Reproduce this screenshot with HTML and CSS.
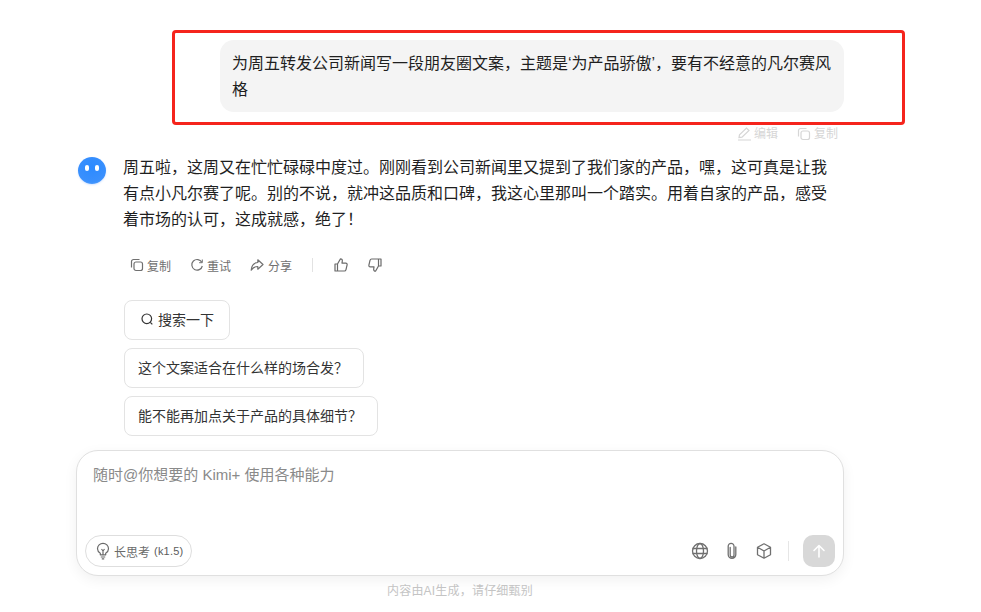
FILE: index.html
```html
<!DOCTYPE html>
<html lang="zh">
<head>
<meta charset="utf-8">
<title>Kimi</title>
<link rel="stylesheet" href="styles.css">
</head>
<body>
<div class="page">
  <section class="user">
    <div class="bubble">为周五转发公司新闻写一段朋友圈文案，主题是‘为产品骄傲’，要有不经意的凡尔赛风格</div>
    <div class="user-actions">
      <span class="act act-edit"><svg width="15" height="14" viewBox="0 0 15 14" fill="none" stroke="currentColor" stroke-width="1.200"><path d="M1 13h13M2 10.500l.5-2.700L9.500 1l2.500 2.500-7 6.700z"/></svg>编辑</span>
      <span class="act"><svg width="14" height="14" viewBox="0 0 14 14" fill="none" stroke="currentColor" stroke-width="1.200"><rect x="4" y="4" width="8.500" height="8.500" rx="2"/><path d="M9.500 1.500H3.500a2 2 0 0 0-2 2v6"/></svg>复制</span>
    </div>
  </section>

  <section class="answer">
    <div class="avatar"><i></i><i></i></div>
    <div class="answer-body">
      <p class="answer-text">周五啦，这周又在忙忙碌碌中度过。刚刚看到公司新闻里又提到了我们家的产品，嘿，这可真是让我有点小凡尔赛了呢。别的不说，就冲这品质和口碑，我这心里那叫一个踏实。用着自家的产品，感受着市场的认可，这成就感，绝了！</p>
      <div class="answer-actions">
        <span class="tool"><svg width="14" height="14" viewBox="0 0 14 14" fill="none" stroke="currentColor" stroke-width="1.200"><rect x="4" y="4" width="8.500" height="8.500" rx="2"/><path d="M9.500 1.500H3.500a2 2 0 0 0-2 2v6"/></svg>复制</span>
        <span class="tool"><svg width="14" height="14" viewBox="0 0 14 14" fill="none" stroke="currentColor" stroke-width="1.200"><path d="M11.800 4.300A5.300 5.300 0 1 0 12.300 8"/><path d="M12.300 1.500v3.200H9.100" stroke-width="1"/></svg>重试</span>
        <span class="tool tool-share"><svg width="14" height="14" viewBox="0 0 14 14" fill="none" stroke="currentColor" stroke-width="1.200" stroke-linejoin="round"><path d="M7.800 1.800 13 6.500l-5.200 4.700V8.500C5 8.500 3 9.500 1.200 12.200 1.500 8 3.800 4.800 7.800 4.500z"/></svg>分享</span>
        <span class="divider"></span>
        <svg class="thumb" width="16" height="16" viewBox="0 0 16 16" fill="none" stroke="currentColor" stroke-width="1.200" stroke-linejoin="round"><path d="M2 7h2.500v7H2zM4.500 7 7.500 1.800c1.300 0 2 1 1.800 2.200L9 6.200h3.800c.9 0 1.500.8 1.300 1.700l-1.100 4.700c-.2.800-.8 1.400-1.600 1.400H4.500"/></svg>
        <svg class="thumb" width="16" height="16" viewBox="0 0 16 16" fill="none" stroke="currentColor" stroke-width="1.200" stroke-linejoin="round"><path d="M14 9h-2.500V2H14zM11.500 9l-3 5.200c-1.300 0-2-1-1.800-2.200L7 9.800H3.200c-.9 0-1.500-.8-1.300-1.700L3 3.400C3.200 2.600 3.800 2 4.600 2h6.900"/></svg>
      </div>
      <div class="suggests">
        <span class="chip chip-search"><svg width="14" height="14" viewBox="0 0 14 14" fill="none" stroke="currentColor" stroke-width="1.200"><circle cx="6.800" cy="6.800" r="4.800"/><path d="m10.300 10.300 2 2"/></svg>搜索一下</span>
        <span class="chip">这个文案适合在什么样的场合发？</span>
        <span class="chip">能不能再加点关于产品的具体细节？</span>
      </div>
    </div>
  </section>

  <section class="composer">
    <div class="placeholder">随时@你想要的 Kimi+ 使用各种能力</div>
    <div class="composer-bar">
      <span class="think"><svg width="16" height="18" viewBox="0 0 16 18" fill="none" stroke="currentColor" stroke-width="1.200" stroke-linejoin="round"><path d="M5.300 12.800v-1.600C3.600 10.200 2.500 8.600 2.500 6.800a5.500 5.500 0 0 1 11 0c0 1.800-1.100 3.400-2.800 4.400v1.600zM5.800 15h4.400M6.500 7l1.500 2 1.500-2M8 9v3.500M6.800 16.800h2.400"/></svg>长思考 <span class="model">(k1.5)</span></span>
      <div class="composer-tools">
        <svg width="18" height="18" viewBox="0 0 18 18" fill="none" stroke="currentColor" stroke-width="1.300"><circle cx="9" cy="9" r="7.500"/><ellipse cx="9" cy="9" rx="3.500" ry="7.500"/><path d="M1.500 6.500h15M1.500 11.500h15"/></svg>
        <svg width="18" height="18" viewBox="0 0 18 18" fill="none" stroke="currentColor" stroke-width="1.300" stroke-linecap="round"><path d="M7.200 5.500v7.500a1.900 1.900 0 0 0 3.800 0V4.200a2.900 2.900 0 0 0-5.800 0V12.500a3.800 3.800 0 0 0 7.600 0V5"/></svg>
        <svg width="18" height="18" viewBox="0 0 18 18" fill="none" stroke="currentColor" stroke-width="1.300" stroke-linejoin="round"><path d="M9 1.800 15.500 5.300v7.400L9 16.200 2.500 12.700V5.300zM2.500 5.300 9 9l6.500-3.700M9 9v7.200"/></svg>
        <span class="tool-divider"></span>
        <button class="send" type="button"><svg width="16" height="16" viewBox="0 0 16 16" fill="none" stroke="#fff" stroke-width="1.600" stroke-linecap="round" stroke-linejoin="round"><path d="M8 14V2.500M3 7.500l5-5 5 5"/></svg></button>
      </div>
    </div>
  </section>
  <div class="disclaimer">内容由AI生成，请仔细甄别</div>
  <div class="annotation"></div>
</div>
</body>
</html>
```
FILE: styles.css
```css
* { box-sizing: border-box; }
html, body { margin: 0; height: 100%; }
body {
  background: #fff;
  color: #1f1f1f;
  font-family: "Liberation Sans", "Noto Sans CJK SC", sans-serif;
  overflow: hidden;
}
.page {
  position: relative;
  width: 981px;
  height: 612px;
  padding: 40px 0 0 76px;
}
.user {
  width: 768px;
  display: flex;
  flex-direction: column;
  align-items: flex-end;
}
.bubble {
  width: 624px;
  height: 72px;
  padding: 11px 12px 9px;
  background: #f4f4f4;
  border-radius: 14px;
  font-size: 16px;
  line-height: 26px;
}
.user-actions {
  display: flex;
  gap: 19px;
  margin-top: 14px;
  padding-right: 6px;
  height: 16px;
  color: #d6d6d6;
  font-size: 12px;
  line-height: 16px;
}
.act, .tool { display: inline-flex; align-items: center; gap: 3px; }
.act-edit { gap: 2px; }
.answer {
  display: flex;
  gap: 17px;
  width: 768px;
  margin-top: 13px;
  padding-left: 2px;
}
.avatar {
  flex: none;
  width: 28px;
  height: 27px;
  margin-top: 2px;
  border-radius: 50%;
  background: radial-gradient(circle at 50% 38%, #2c8aff 0, #3a90fd 68%, #78b6ff 100%);
  box-shadow: 0 1px 2px rgba(120, 170, 255, .3);
  display: flex;
  justify-content: center;
  gap: 6px;
  padding-top: 8px;
}
.avatar i {
  width: 4px;
  height: 6px;
  border-radius: 2px;
  background: #fff;
}
.answer-body { width: 705px; }
.answer-text {
  margin: 0;
  font-size: 16px;
  line-height: 26px;
}
.answer-actions {
  display: flex;
  align-items: center;
  height: 18px;
  margin-top: 23px;
  padding-left: 7px;
  color: #707070;
  font-size: 12px;
}
.tool { margin-right: 19px; }
.tool-share { gap: 4px; margin-right: 20px; }
.divider {
  width: 1px;
  height: 14px;
  background: #e2e2e2;
  margin: 0 20px 0 0;
}
.thumb { margin-right: 18px; color: #6a6a6a; }
.suggests {
  margin-top: 26px;
  padding-left: 1px;
  display: flex;
  flex-direction: column;
  align-items: flex-start;
  gap: 8px;
}
.chip {
  display: inline-flex;
  align-items: center;
  height: 40px;
  padding: 0 15px 2px 13px;
  border: 1px solid #e3e3e3;
  border-radius: 8px;
  font-size: 14px;
  color: #333;
  background: #fff;
}
.chip-search { padding: 0 15px 2px; gap: 4px; }
.composer {
  position: absolute;
  left: 76px;
  top: 450px;
  width: 768px;
  height: 126px;
  background: #fff;
  border: 1px solid #e0e0e0;
  border-radius: 22px;
  box-shadow: 0 4px 14px rgba(0, 0, 0, .06);
  display: flex;
  flex-direction: column;
  justify-content: space-between;
  padding: 14px 8px 8px 8px;
}
.placeholder {
  padding-left: 8px;
  font-size: 15px;
  line-height: 20px;
  color: #8a8a8a;
}
.composer-bar { display: flex; justify-content: space-between; align-items: center; }
.think {
  display: inline-flex;
  align-items: center;
  height: 32px;
  padding: 0 8px 0 9px;
  border: 1px solid #dedede;
  border-radius: 16px;
  font-size: 12px;
  color: #6a6a6a;
}
.think svg { margin-right: 3px; }
.model { margin-left: 4px; font-size: 11px; letter-spacing: .2px; color: #5c5c5c; }
.composer-tools {
  display: flex;
  align-items: center;
  gap: 14px;
  color: #707070;
}
.tool-divider { width: 1px; height: 20px; background: #e6e6e6; margin-left: 1px; }
.send {
  width: 32px;
  height: 32px;
  padding: 0;
  border: 0;
  border-radius: 10px;
  background: #d8d8d8;
  display: flex;
  align-items: center;
  justify-content: center;
}
.disclaimer {
  position: absolute;
  left: 76px;
  top: 582px;
  width: 768px;
  text-align: center;
  font-size: 12px;
  letter-spacing: .2px;
  line-height: 18px;
  color: #c4c4c4;
}
.annotation {
  position: absolute;
  left: 172px;
  top: 30px;
  width: 733px;
  height: 95px;
  border: 3px solid #f5241c;
  border-radius: 4px;
  pointer-events: none;
}
```
